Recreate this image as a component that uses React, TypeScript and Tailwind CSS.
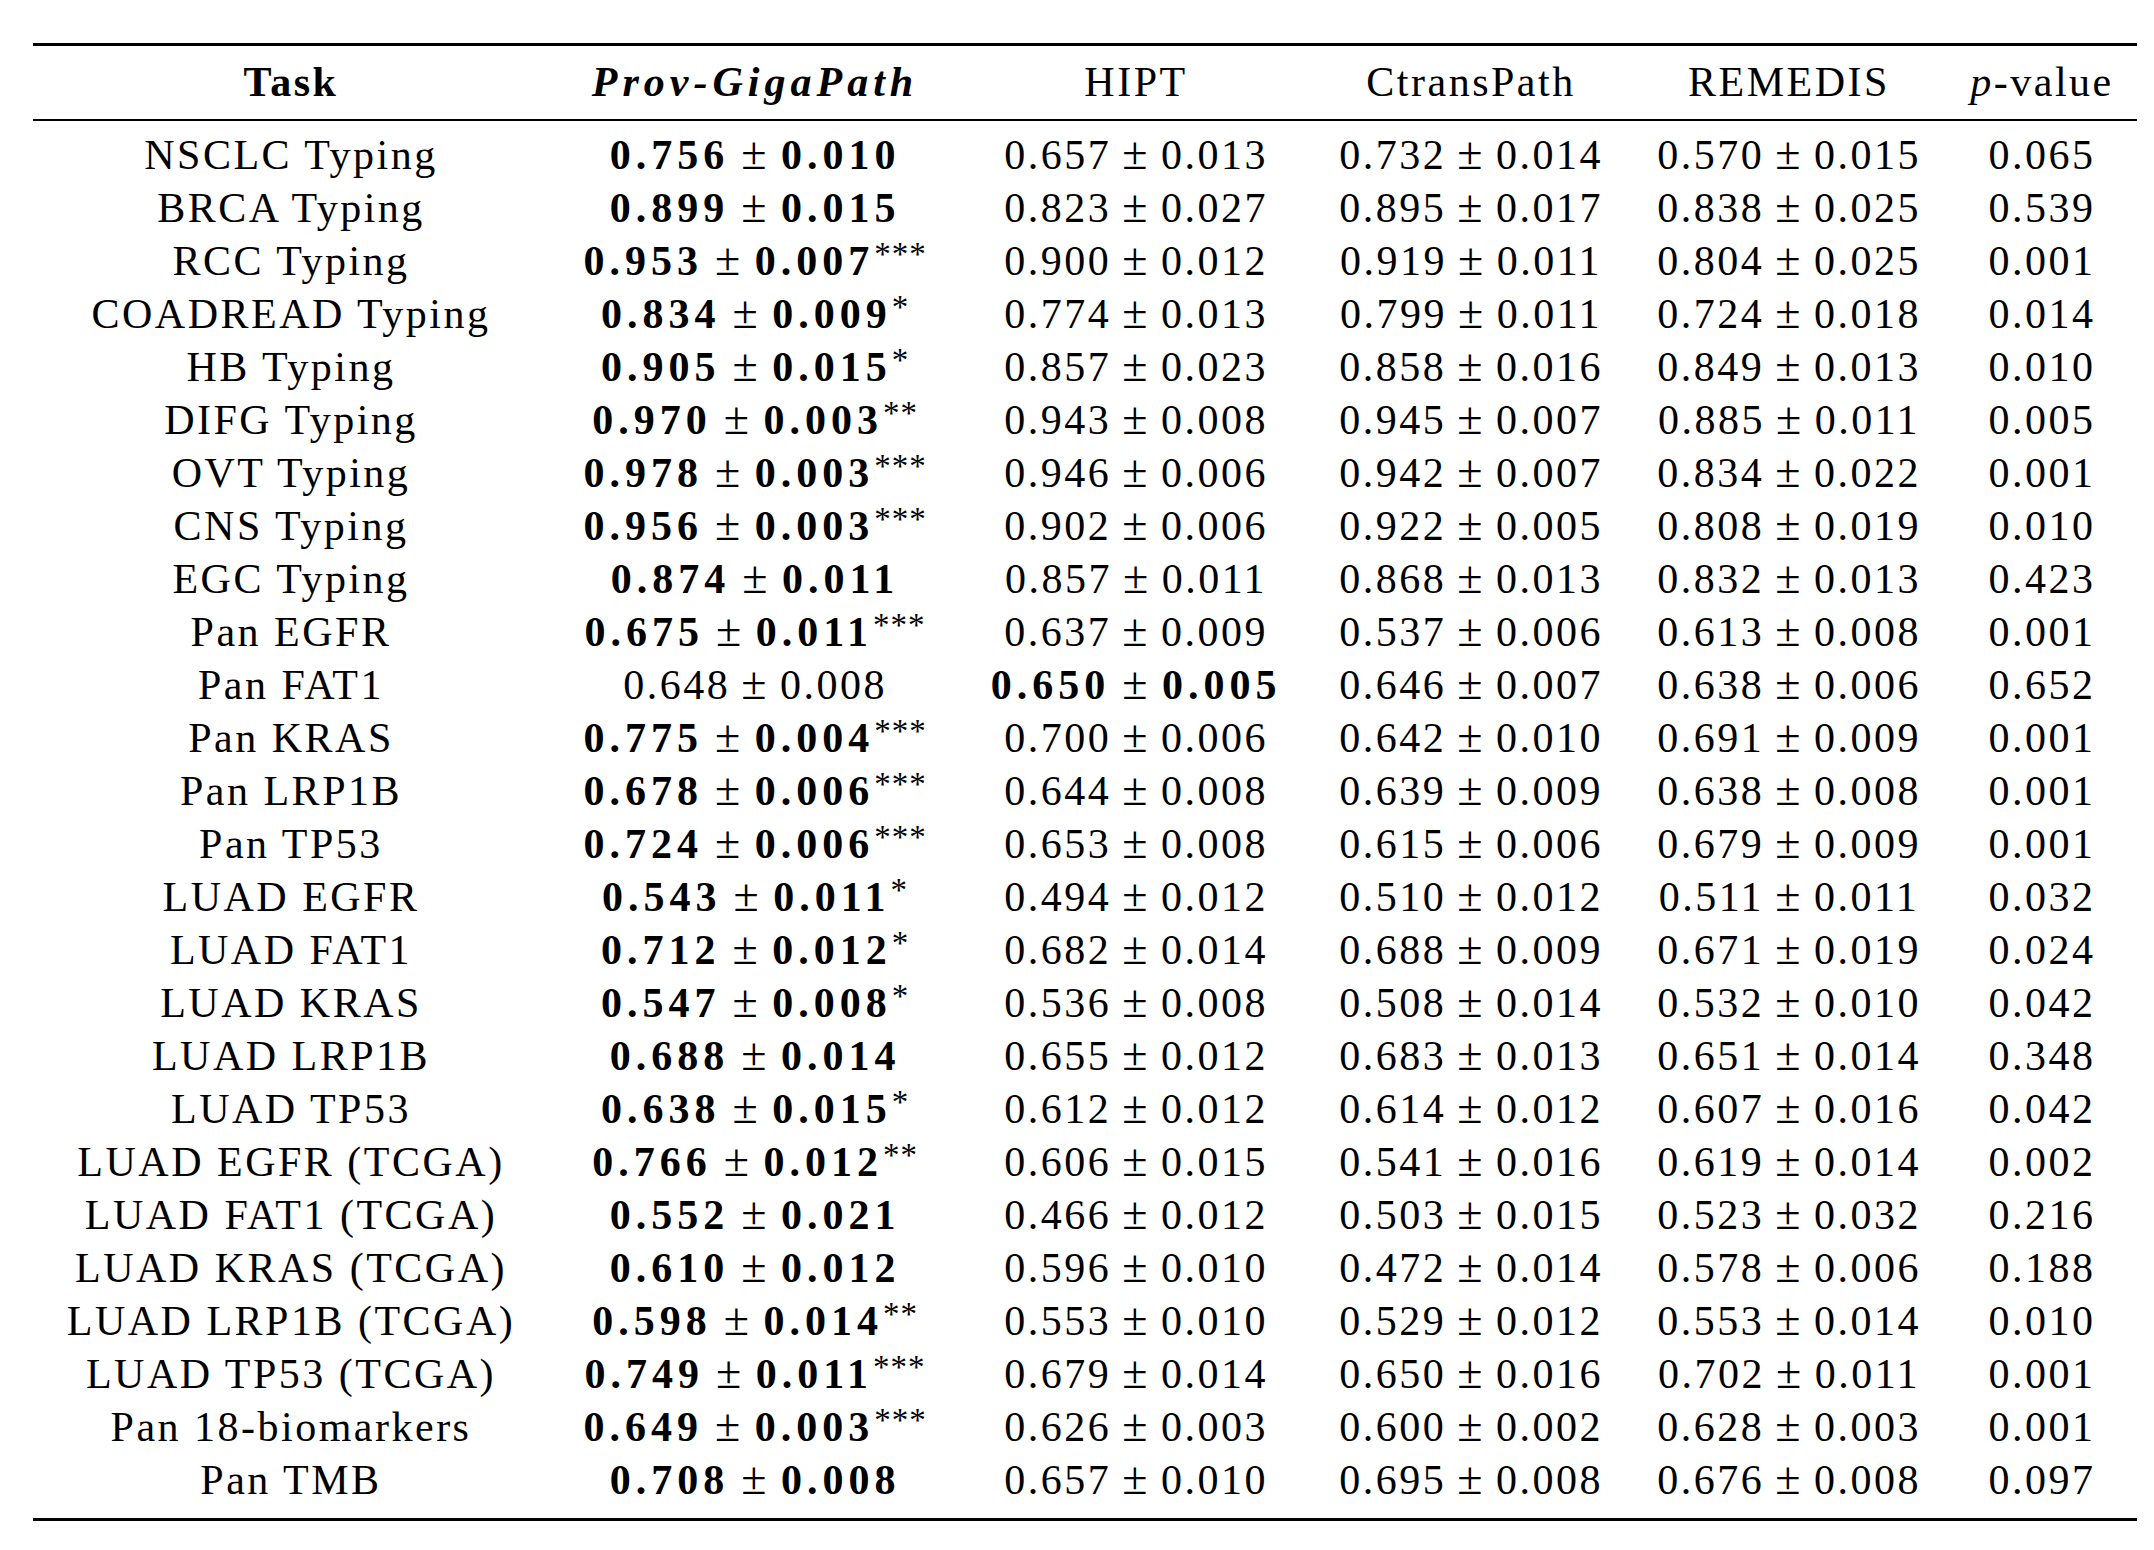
type Cell = { v: string; bold?: boolean; stars?: string };
type Row = { task: string; cells: Cell[]; p: string };

const r = (v: string): Cell => ({ v });
const b = (v: string, stars = ''): Cell => ({ v, bold: true, stars });

const rows: Row[] = [
  { task: 'NSCLC Typing', cells: [b('0.756 ± 0.010'), r('0.657 ± 0.013'), r('0.732 ± 0.014'), r('0.570 ± 0.015')], p: '0.065' },
  { task: 'BRCA Typing', cells: [b('0.899 ± 0.015'), r('0.823 ± 0.027'), r('0.895 ± 0.017'), r('0.838 ± 0.025')], p: '0.539' },
  { task: 'RCC Typing', cells: [b('0.953 ± 0.007', '***'), r('0.900 ± 0.012'), r('0.919 ± 0.011'), r('0.804 ± 0.025')], p: '0.001' },
  { task: 'COADREAD Typing', cells: [b('0.834 ± 0.009', '*'), r('0.774 ± 0.013'), r('0.799 ± 0.011'), r('0.724 ± 0.018')], p: '0.014' },
  { task: 'HB Typing', cells: [b('0.905 ± 0.015', '*'), r('0.857 ± 0.023'), r('0.858 ± 0.016'), r('0.849 ± 0.013')], p: '0.010' },
  { task: 'DIFG Typing', cells: [b('0.970 ± 0.003', '**'), r('0.943 ± 0.008'), r('0.945 ± 0.007'), r('0.885 ± 0.011')], p: '0.005' },
  { task: 'OVT Typing', cells: [b('0.978 ± 0.003', '***'), r('0.946 ± 0.006'), r('0.942 ± 0.007'), r('0.834 ± 0.022')], p: '0.001' },
  { task: 'CNS Typing', cells: [b('0.956 ± 0.003', '***'), r('0.902 ± 0.006'), r('0.922 ± 0.005'), r('0.808 ± 0.019')], p: '0.010' },
  { task: 'EGC Typing', cells: [b('0.874 ± 0.011'), r('0.857 ± 0.011'), r('0.868 ± 0.013'), r('0.832 ± 0.013')], p: '0.423' },
  { task: 'Pan EGFR', cells: [b('0.675 ± 0.011', '***'), r('0.637 ± 0.009'), r('0.537 ± 0.006'), r('0.613 ± 0.008')], p: '0.001' },
  { task: 'Pan FAT1', cells: [r('0.648 ± 0.008'), b('0.650 ± 0.005'), r('0.646 ± 0.007'), r('0.638 ± 0.006')], p: '0.652' },
  { task: 'Pan KRAS', cells: [b('0.775 ± 0.004', '***'), r('0.700 ± 0.006'), r('0.642 ± 0.010'), r('0.691 ± 0.009')], p: '0.001' },
  { task: 'Pan LRP1B', cells: [b('0.678 ± 0.006', '***'), r('0.644 ± 0.008'), r('0.639 ± 0.009'), r('0.638 ± 0.008')], p: '0.001' },
  { task: 'Pan TP53', cells: [b('0.724 ± 0.006', '***'), r('0.653 ± 0.008'), r('0.615 ± 0.006'), r('0.679 ± 0.009')], p: '0.001' },
  { task: 'LUAD EGFR', cells: [b('0.543 ± 0.011', '*'), r('0.494 ± 0.012'), r('0.510 ± 0.012'), r('0.511 ± 0.011')], p: '0.032' },
  { task: 'LUAD FAT1', cells: [b('0.712 ± 0.012', '*'), r('0.682 ± 0.014'), r('0.688 ± 0.009'), r('0.671 ± 0.019')], p: '0.024' },
  { task: 'LUAD KRAS', cells: [b('0.547 ± 0.008', '*'), r('0.536 ± 0.008'), r('0.508 ± 0.014'), r('0.532 ± 0.010')], p: '0.042' },
  { task: 'LUAD LRP1B', cells: [b('0.688 ± 0.014'), r('0.655 ± 0.012'), r('0.683 ± 0.013'), r('0.651 ± 0.014')], p: '0.348' },
  { task: 'LUAD TP53', cells: [b('0.638 ± 0.015', '*'), r('0.612 ± 0.012'), r('0.614 ± 0.012'), r('0.607 ± 0.016')], p: '0.042' },
  { task: 'LUAD EGFR (TCGA)', cells: [b('0.766 ± 0.012', '**'), r('0.606 ± 0.015'), r('0.541 ± 0.016'), r('0.619 ± 0.014')], p: '0.002' },
  { task: 'LUAD FAT1 (TCGA)', cells: [b('0.552 ± 0.021'), r('0.466 ± 0.012'), r('0.503 ± 0.015'), r('0.523 ± 0.032')], p: '0.216' },
  { task: 'LUAD KRAS (TCGA)', cells: [b('0.610 ± 0.012'), r('0.596 ± 0.010'), r('0.472 ± 0.014'), r('0.578 ± 0.006')], p: '0.188' },
  { task: 'LUAD LRP1B (TCGA)', cells: [b('0.598 ± 0.014', '**'), r('0.553 ± 0.010'), r('0.529 ± 0.012'), r('0.553 ± 0.014')], p: '0.010' },
  { task: 'LUAD TP53 (TCGA)', cells: [b('0.749 ± 0.011', '***'), r('0.679 ± 0.014'), r('0.650 ± 0.016'), r('0.702 ± 0.011')], p: '0.001' },
  { task: 'Pan 18-biomarkers', cells: [b('0.649 ± 0.003', '***'), r('0.626 ± 0.003'), r('0.600 ± 0.002'), r('0.628 ± 0.003')], p: '0.001' },
  { task: 'Pan TMB', cells: [b('0.708 ± 0.008'), r('0.657 ± 0.010'), r('0.695 ± 0.008'), r('0.676 ± 0.008')], p: '0.097' },
];

const grid = 'grid grid-cols-[516px_412px_350px_320px_316px_190px] h-[53px] leading-[53px] text-center whitespace-nowrap';

// mean ± sd, with the larger math-style ± of the original table
function Value({ cell }: { cell: Cell }) {
  const [a, c] = cell.v.split(' ± ');
  const num = cell.bold ? 'font-bold tracking-[5px]' : '';
  return (
    <span>
      <span className={num}>{a}</span>
      <span className={cell.bold ? 'px-[12px] text-[46px] leading-none' : 'px-[11px] text-[46px] leading-none'}>±</span>
      <span className={num}>{c}</span>
      {cell.stars && (
        <span className="relative -top-[10px] text-[33px] leading-none tracking-[1px]">{cell.stars}</span>
      )}
    </span>
  );
}

export default function App() {
  return (
    <div
      className="w-[2154px] h-[1550px] bg-white text-black text-[42px] tracking-[2.5px] pt-[43px] pl-[33px]"
      style={{ fontFamily: '"Liberation Serif", "Times New Roman", serif' }}
    >
      <div className="w-[2104px]">
        <div className="h-[3px] bg-black" />

        {/* header */}
        <div className={`${grid} mt-[10px]`}>
          <div className="font-bold">Task</div>
          <div className="font-bold italic tracking-[5px]">Prov-GigaPath</div>
          <div>HIPT</div>
          <div>CtransPath</div>
          <div>REMEDIS</div>
          <div>
            <span className="italic">p</span>-value
          </div>
        </div>

        <div className="h-[2px] bg-black mt-[10px]" />

        <div className="pt-[8px]">
          {rows.map((row) => (
            <div key={row.task} className={grid}>
              <div>{row.task}</div>
              {row.cells.map((c, i) => (
                <div key={i}>
                  <Value cell={c} />
                </div>
              ))}
              <div>{row.p}</div>
            </div>
          ))}
        </div>

        <div className="h-[3px] bg-black mt-[11px]" />
      </div>
    </div>
  );
}
